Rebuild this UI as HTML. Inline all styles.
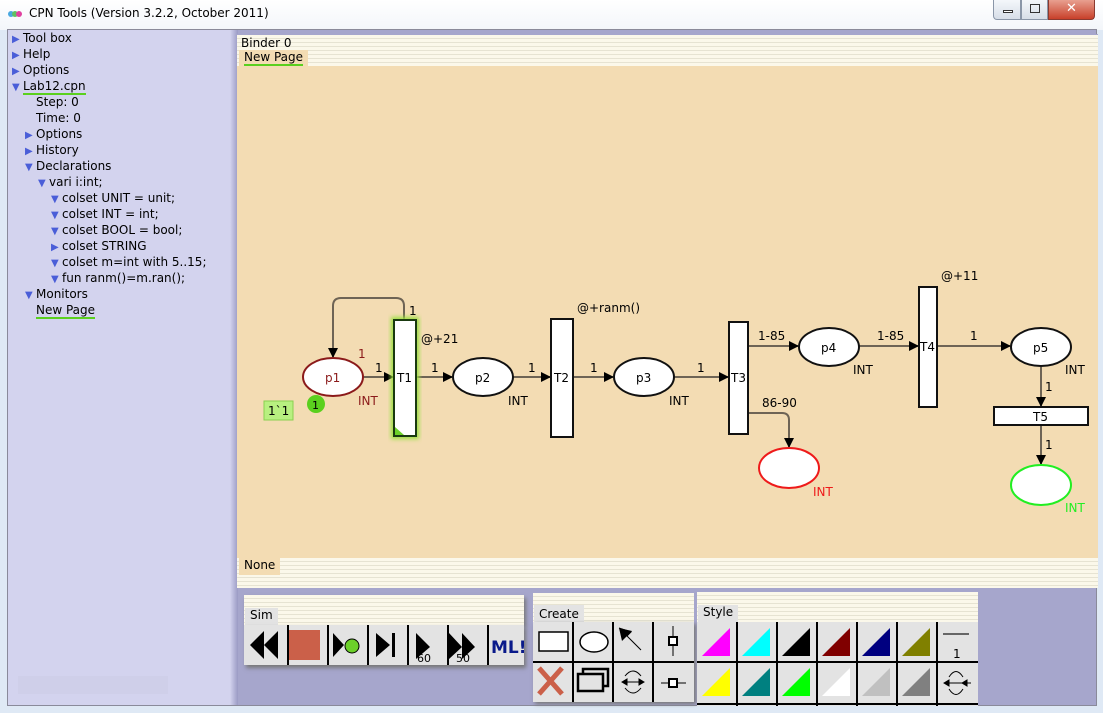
<!DOCTYPE html>
<html><head><meta charset="utf-8"><style>
*{margin:0;padding:0;box-sizing:border-box}
body{width:1103px;height:713px;overflow:hidden;background:#dfe9f5;font-family:"DejaVu Sans","Liberation Sans",sans-serif;font-size:12px;position:relative}
.abs{position:absolute}
.title{left:0;top:0;width:1103px;height:30px;background:linear-gradient(#ffffff,#f3f6fa)}
.ws{left:7px;top:29px;width:1090px;height:677px;background:#a6a6cc;border:1px solid #8a8a9a}
.left{left:8px;top:30px;width:222px;height:675px;background:#d3d3ee}
.tr{position:absolute;font-size:12px;color:#000;line-height:16px;white-space:nowrap}
.ar{color:#4a5ed8;font-size:10px;display:inline-block;width:11px}
.lines{background:repeating-linear-gradient(#fbf8ea 0 3px,#e6e3d2 3px 4px)}
.tab{position:absolute;background:#f3dcb3;font-size:12px;padding:0 5px;line-height:15px}
.cell{position:absolute;width:40px;height:40px;border-right:2px solid #000;background:#e3e3e3}
</style></head><body>
<div class="abs title"></div>
<div class="abs" style="left:8px;top:8px;width:14px;height:10px">
<svg width="14" height="10"><circle cx="3" cy="5" r="3" fill="#4aa8e0"/><circle cx="7" cy="5" r="3" fill="#60c060"/><circle cx="11" cy="5" r="3" fill="#e040a0"/></svg></div>
<div class="abs" style="left:29px;top:6px;font-size:12px;color:#000;font-family:'DejaVu Sans',sans-serif">CPN Tools (Version 3.2.2, October 2011)</div>
<div class="abs" style="left:993px;top:0;width:28px;height:20px;border:1px solid #8a96a8;border-top:0;border-radius:0 0 0 4px;background:linear-gradient(#f4f7fb,#d7dee8)"><div class="abs" style="left:9px;top:10px;width:10px;height:3px;border:1px solid #333;background:#fff"></div></div>
<div class="abs" style="left:1021px;top:0;width:27px;height:20px;border:1px solid #8a96a8;border-top:0;background:linear-gradient(#f4f7fb,#d7dee8)"><div class="abs" style="left:8px;top:4px;width:10px;height:9px;border:1px solid #333"></div></div>
<div class="abs" style="left:1048px;top:0;width:47px;height:20px;border:1px solid #8a3a30;border-top:0;border-radius:0 0 4px 0;background:linear-gradient(#e8a090,#c8402a);color:#fff;font-weight:bold;text-align:center;line-height:18px;font-size:13px">✕</div>
<div class="abs ws"></div>
<div class="abs left"></div>
<div class="abs" style="left:230px;top:30px;width:8px;height:675px;background:linear-gradient(90deg,#d3d3ee,#9a9ac4)"></div>
<!-- tree -->
<div class="tr" style="left:12px;top:30px"><span class="ar">▶</span>Tool box</div>
<div class="tr" style="left:12px;top:46px"><span class="ar">▶</span>Help</div>
<div class="tr" style="left:12px;top:62px"><span class="ar">▶</span>Options</div>
<div class="tr" style="left:12px;top:78px"><span class="ar">▼</span><span style="border-bottom:2px solid #5ad01e">Lab12.cpn</span></div>
<div class="tr" style="left:36px;top:94px">Step: 0</div>
<div class="tr" style="left:36px;top:110px">Time: 0</div>
<div class="tr" style="left:25px;top:126px"><span class="ar">▶</span>Options</div>
<div class="tr" style="left:25px;top:142px"><span class="ar">▶</span>History</div>
<div class="tr" style="left:25px;top:158px"><span class="ar">▼</span>Declarations</div>
<div class="tr" style="left:38px;top:174px"><span class="ar">▼</span>vari i:int;</div>
<div class="tr" style="left:51px;top:190px"><span class="ar">▼</span>colset UNIT = unit;</div>
<div class="tr" style="left:51px;top:206px"><span class="ar">▼</span>colset INT = int;</div>
<div class="tr" style="left:51px;top:222px"><span class="ar">▼</span>colset BOOL = bool;</div>
<div class="tr" style="left:51px;top:238px"><span class="ar">▶</span>colset STRING</div>
<div class="tr" style="left:51px;top:254px"><span class="ar">▼</span>colset m=int with 5..15;</div>
<div class="tr" style="left:51px;top:270px"><span class="ar">▼</span>fun ranm()=m.ran();</div>
<div class="tr" style="left:25px;top:286px"><span class="ar">▼</span>Monitors</div>
<div class="tr" style="left:36px;top:302px"><span style="border-bottom:2px solid #5ad01e">New Page</span></div>
<div class="abs" style="left:18px;top:676px;width:150px;height:18px;background:#cfcfe9"></div>
<!-- binder -->
<div class="abs lines" style="left:237px;top:34px;width:861px;height:32px;border-top:1px solid #a6a6cc"></div>
<div class="abs" style="left:241px;top:36px;font-size:12px;line-height:14px">Binder 0</div>
<div class="tab" style="left:239px;top:50px;height:16px"><span style="border-bottom:2px solid #5ad01e">New Page</span></div>
<div class="abs" style="left:237px;top:66px;width:861px;height:492px;background:#f3dcb3"></div>
<div class="abs lines" style="left:237px;top:558px;width:861px;height:30px"></div>
<div class="tab" style="left:239px;top:558px;height:17px;padding-left:5px">None</div>
<!-- net -->
<svg class="abs" style="left:0;top:0" width="1103" height="713" font-family="DejaVu Sans,sans-serif" font-size="12">
<defs><marker id="a" markerWidth="10" markerHeight="10" refX="9" refY="5" orient="auto" markerUnits="userSpaceOnUse"><path d="M0,0L10,5L0,10z" fill="#000"/></marker>
<filter id="g"><feGaussianBlur stdDeviation="2"/></filter></defs>
<g stroke="#6e6455" stroke-width="2" fill="none" marker-end="url(#a)">
<path d="M363,377H393"/><path d="M417,377H452"/><path d="M513,377H550"/><path d="M574,377H613"/><path d="M674,377H728"/>
<path d="M404,319V306Q404,298 396,298H341Q333,298 333,306V357"/>
<path d="M749,346H798"/><path d="M859,346H918"/><path d="M938,346H1010"/>
<path d="M749,413H782Q789,413 789,420V447"/>
<path d="M1041,367V406"/><path d="M1041,426V464"/>
</g>
<rect x="391" y="317" width="28" height="122" fill="#9be040" filter="url(#g)"/>
<rect x="394" y="320" width="22" height="116" fill="#fff" stroke="#1a3a10" stroke-width="2"/>
<path d="M395,427L395,435L404,435z" fill="#6cd02a"/>
<rect x="551" y="319" width="22" height="118" fill="#fff" stroke="#111" stroke-width="2"/>
<rect x="729" y="322" width="19" height="112" fill="#fff" stroke="#111" stroke-width="2"/>
<rect x="919" y="287" width="18" height="120" fill="#fff" stroke="#111" stroke-width="2"/>
<rect x="994" y="407" width="94" height="18" fill="#fff" stroke="#111" stroke-width="2"/>
<ellipse cx="333" cy="377" rx="30" ry="19" fill="#fff" stroke="#8b1a1a" stroke-width="2"/>
<ellipse cx="483" cy="377" rx="30" ry="19" fill="#fff" stroke="#111" stroke-width="2"/>
<ellipse cx="644" cy="377" rx="30" ry="19" fill="#fff" stroke="#111" stroke-width="2"/>
<ellipse cx="829" cy="347" rx="30" ry="19" fill="#fff" stroke="#111" stroke-width="2"/>
<ellipse cx="1041" cy="347" rx="30" ry="19" fill="#fff" stroke="#111" stroke-width="2"/>
<ellipse cx="789" cy="468" rx="30" ry="20" fill="#fff" stroke="#ee1a1a" stroke-width="2"/>
<ellipse cx="1041" cy="485" rx="30" ry="20" fill="#fff" stroke="#22ee22" stroke-width="2"/>
<g fill="#000">
<text x="325" y="382" fill="#8b1a1a">p1</text><text x="475" y="382">p2</text><text x="636" y="382">p3</text><text x="821" y="352">p4</text><text x="1033" y="352">p5</text>
<text x="397" y="382">T1</text><text x="554" y="382">T2</text><text x="731" y="382">T3</text><text x="920" y="351">T4</text><text x="1033" y="421">T5</text>
<text x="358" y="405" fill="#8b1a1a">INT</text><text x="508" y="405">INT</text><text x="669" y="405">INT</text><text x="853" y="374">INT</text><text x="1065" y="374">INT</text>
<text x="813" y="496" fill="#ee1a1a">INT</text><text x="1065" y="512" fill="#22ee22">INT</text>
<text x="358" y="358" fill="#8b1a1a">1</text><text x="375" y="372">1</text><text x="431" y="372">1</text><text x="528" y="372">1</text><text x="590" y="372">1</text><text x="697" y="372">1</text><text x="409" y="315">1</text>
<text x="421" y="343">@+21</text><text x="577" y="312">@+ranm()</text><text x="941" y="280">@+11</text>
<text x="758" y="340">1-85</text><text x="877" y="340">1-85</text><text x="970" y="340">1</text><text x="762" y="407">86-90</text>
<text x="1045" y="391">1</text><text x="1045" y="449">1</text>
</g>
<rect x="264" y="401" width="29" height="19" fill="#b8f080" stroke="#8ad050"/>
<text x="268" y="415" font-size="12">1`1</text>
<circle cx="316" cy="404" r="9" fill="#5ad01e"/>
<text x="312" y="409" font-size="11">1</text>
</svg>
<!-- Sim -->
<div class="abs lines" style="left:244px;top:595px;width:280px;height:30px;box-shadow:2px 3px 4px #777"></div>
<div class="tab" style="left:245px;top:608px;background:#e3e3e3;height:17px">Sim</div>
<div class="abs" style="left:244px;top:625px;width:280px;height:40px;background:#e3e3e3;box-shadow:2px 3px 4px #777"></div>
<svg class="abs" style="left:244px;top:625px" width="280" height="40">
<g stroke="#000" stroke-width="2"><path d="M44,0V40M84,0V40M124,0V40M164,0V40M204,0V40M244,0V40"/></g>
<path d="M6,20L20,6V34zM20,20L34,6V34z" fill="#000"/>
<rect x="45" y="5" width="31" height="30" fill="#cb6049"/>
<path d="M89,8L100,20L89,32z" fill="#000"/><circle cx="108" cy="21" r="7" fill="#6cd02a" stroke="#000"/>
<path d="M132,8L146,20L132,32z" fill="#000"/><rect x="148" y="8" width="3" height="24" fill="#000"/>
<path d="M172,8L186,22L172,34z" fill="#000"/><text x="173" y="37" font-size="11" font-family="DejaVu Sans">60</text>
<path d="M205,8L218,22L205,34zM218,8L231,22L218,34z" fill="#000"/><text x="212" y="37" font-size="11" font-family="DejaVu Sans">50</text>
<text x="247" y="28" font-size="17" font-weight="bold" fill="#0a1a8a" font-family="DejaVu Sans">ML!</text>
</svg>
<!-- Create -->
<div class="abs lines" style="left:533px;top:593px;width:161px;height:30px"></div>
<div class="tab" style="left:534px;top:605px;background:#e3e3e3;height:18px;line-height:18px">Create</div>
<div class="abs" style="left:533px;top:622px;width:161px;height:80px;background:#e3e3e3;box-shadow:2px 2px 4px #777"></div>
<svg class="abs" style="left:533px;top:622px" width="161" height="80">
<g stroke="#000" stroke-width="2" fill="none"><path d="M40,0V80M80,0V80M120,0V80M0,40H161"/></g>
<rect x="6" y="10" width="29" height="19" fill="#fff" stroke="#000" stroke-width="1.5"/>
<ellipse cx="61" cy="20" rx="14" ry="10" fill="#fff" stroke="#000" stroke-width="1.5"/>
<path d="M86,6L98,10L94,14L108,28" stroke="#000" fill="none"/><path d="M86,6L99,9L89,19z" fill="#000"/>
<path d="M140,4V34" stroke="#000"/><rect x="136" y="15" width="8" height="8" fill="#fff" stroke="#000" stroke-width="2"/>
<path d="M6,46L29,72M29,46L6,72" stroke="#cb6049" stroke-width="5"/>
<rect x="50" y="47" width="25" height="17" fill="none" stroke="#000" stroke-width="2.5"/><rect x="45" y="52" width="25" height="17" fill="#e3e3e3" stroke="#000" stroke-width="2.5"/>
<path d="M92,60H108M89,60l5,-3v6zM111,60l-5,-3v6z" stroke="#000" fill="#000"/><path d="M92,54Q100,44 108,54M92,66Q100,76 108,66" stroke="#000" fill="none"/>
<path d="M128,61H153" stroke="#000"/><rect x="136" y="57" width="8" height="8" fill="#fff" stroke="#000" stroke-width="2"/>
</svg>
<!-- Style -->
<div class="abs lines" style="left:697px;top:592px;width:281px;height:30px"></div>
<div class="tab" style="left:698px;top:605px;background:#e3e3e3;height:17px">Style</div>
<div class="abs" style="left:697px;top:622px;width:281px;height:84px;background:#e3e3e3"></div>
<svg class="abs" style="left:697px;top:622px" width="281" height="84">
<g stroke="#000" stroke-width="2" fill="none"><path d="M40,0V84M80,0V84M120,0V84M160,0V84M200,0V84M240,0V84M0,40H281M0,82H281"/></g>
<path d="M5,34L33,6V34z" fill="#ff00ff"/><path d="M45,34L73,6V34z" fill="#00ffff"/><path d="M85,34L113,6V34z" fill="#000"/><path d="M125,34L153,6V34z" fill="#800000"/><path d="M165,34L193,6V34z" fill="#000080"/><path d="M205,34L233,6V34z" fill="#808000"/>
<path d="M5,74L33,46V74z" fill="#ffff00"/><path d="M45,74L73,46V74z" fill="#008080"/><path d="M85,74L113,46V74z" fill="#00ff00"/><path d="M125,74L153,46V74z" fill="#fff"/><path d="M165,74L193,46V74z" fill="#c0c0c0"/><path d="M205,74L233,46V74z" fill="#808080"/>
<path d="M246,12H272" stroke="#666" stroke-width="2"/><text x="256" y="36" font-size="12" font-family="DejaVu Sans">1</text>
<path d="M248,61H274M247,61l5,-3v6zM265,61l5,-3v6z" stroke="#000" fill="#000"/><path d="M252,55Q259,44 266,55M252,67Q259,78 266,67" stroke="#000" fill="none"/>
</svg>
</body></html>
